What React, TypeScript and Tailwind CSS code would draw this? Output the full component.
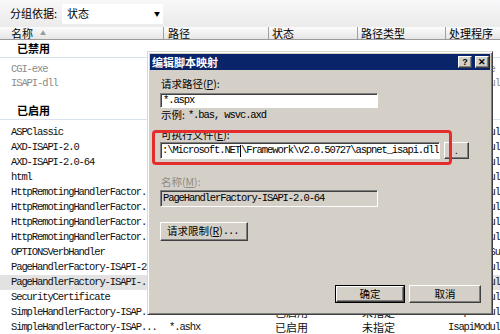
import React from 'react';

const mono = "font-['Liberation_Mono',monospace] text-[10.5px] tracking-[-1.1px]";
const cjk = "font-['Noto_Sans_CJK_SC',sans-serif]";

type Row = {
  name: string;
  path: string;
  state: string;
  type: string;
  handler: string;
  selected?: boolean;
};

const disabledRows: Row[] = [
  { name: 'CGI-exe', path: '*.exe', state: '已禁用', type: '文件', handler: 'CgiModule' },
  { name: 'ISAPI-dll', path: '*.dll', state: '已禁用', type: '文件', handler: 'IsapiModule' },
];

const enabledRows: Row[] = [
  { name: 'ASPClassic', path: '*.asp', state: '已启用', type: '文件', handler: 'IsapiModule' },
  { name: 'AXD-ISAPI-2.0', path: '*.axd', state: '已启用', type: '未指定', handler: 'IsapiModule' },
  { name: 'AXD-ISAPI-2.0-64', path: '*.axd', state: '已启用', type: '未指定', handler: 'IsapiModule' },
  { name: 'html', path: '*.html', state: '已启用', type: '文件', handler: 'IsapiModule' },
  { name: 'HttpRemotingHandlerFactor.', path: '*.rem', state: '已启用', type: '未指定', handler: 'IsapiModule' },
  { name: 'HttpRemotingHandlerFactor.', path: '*.rem', state: '已启用', type: '未指定', handler: 'IsapiModule' },
  { name: 'HttpRemotingHandlerFactor.', path: '*.soap', state: '已启用', type: '未指定', handler: 'IsapiModule' },
  { name: 'HttpRemotingHandlerFactor.', path: '*.soap', state: '已启用', type: '未指定', handler: 'IsapiModule' },
  { name: 'OPTIONSVerbHandler', path: '*', state: '已启用', type: '未指定', handler: 'ProtocolSupportModule' },
  { name: 'PageHandlerFactory-ISAPI-2', path: '*.aspx', state: '已启用', type: '未指定', handler: 'IsapiModule' },
  { name: 'PageHandlerFactory-ISAPI-.', path: '*.aspx', state: '已启用', type: '未指定', handler: 'IsapiModule', selected: true },
  { name: 'SecurityCertificate', path: '*.cer', state: '已启用', type: '文件', handler: 'IsapiModule' },
  { name: 'SimpleHandlerFactory-ISAP.', path: '*.ashx', state: '已启用', type: '未指定', handler: 'IsapiModule' },
  { name: 'SimpleHandlerFactory-ISAP...', path: '*.ashx', state: '已启用', type: '未指定', handler: 'IsapiModule' },
];

const ListRow = ({ row, h, muted }: { row: Row; h: string; muted?: boolean }) => (
  <div
    className={`flex items-center whitespace-nowrap ${h} ${row.selected ? 'bg-[#e2e2e2]' : ''} ${
      muted ? 'text-[#8c8c8c]' : 'text-[#111]'
    }`}
  >
    <div className={`w-[164px] pl-[11px] overflow-hidden ${mono}`}>{row.name}</div>
    <div className={`w-[105px] pl-[5px] ${mono}`}>{row.path}</div>
    <div className={`w-[89px] pl-[6px] text-[11px] leading-none ${cjk}`}>{row.state}</div>
    <div className={`w-[88px] pl-[4px] text-[11px] leading-none ${cjk}`}>{row.type}</div>
    <div className={`flex-1 pl-[2px] overflow-hidden ${mono}`}>{row.handler}</div>
  </div>
);

const GroupHeader = ({ label }: { label: string }) => (
  <div className="h-[18px] pl-[17px] flex items-center border-b border-[#d9e2ec]">
    <span className={`text-[11px] font-bold leading-none text-black ${cjk}`}>{label}</span>
  </div>
);

const raised =
  'bg-[#d4d0c8] border border-t-white border-l-white border-r-[#404040] border-b-[#404040] shadow-[inset_-1px_-1px_0_#808080]';
const sunken =
  'border border-t-[#808080] border-l-[#808080] border-r-white border-b-white shadow-[inset_1px_1px_0_#404040]';

const Label = ({ children, muted }: { children: React.ReactNode; muted?: boolean }) => (
  <div className={`h-[14px] pl-[1px] flex items-center text-[10.5px] leading-none ${cjk} ${muted ? 'text-[#8c8a85]' : 'text-black'}`}>
    {children}
  </div>
);

const EditDialog = () => (
  <div className="absolute left-[147px] top-[51px] w-[346px] h-[264px] bg-[#d4d0c8] border border-t-[#dcd9d2] border-l-[#dcd9d2] border-r-[#404040] border-b-[#404040] shadow-[inset_1px_1px_0_#fff,inset_-1px_-1px_0_#808080] p-[2px] flex flex-col">
    {/* title bar */}
    <div className="h-[16px] bg-[#0a246a] flex items-center justify-between pl-[2px] pr-[1px]">
      <span className={`text-[11px] font-bold text-white leading-none ${cjk}`}>编辑脚本映射</span>
      <div className="flex gap-[3px]">
        <div className={`w-[14px] h-[12px] flex items-center justify-center text-[9px] font-bold leading-none text-black font-['Liberation_Sans',sans-serif] ${raised}`}>?</div>
        <div className={`w-[14px] h-[12px] flex items-center justify-center text-[9px] font-bold leading-none text-black font-['Liberation_Sans',sans-serif] ${raised}`}>✕</div>
      </div>
    </div>

    <div className="flex flex-col pl-[10px] flex-1">
      <div className="mt-[7px]">
        <Label>
          请求路径(<span className="underline">P</span>):
        </Label>
      </div>
      <div className={`mt-[2px] w-[218px] h-[15px] bg-white flex items-center pl-[2px] text-black ${mono} ${sunken}`}>
        *.aspx
      </div>
      <Label>
        示例: <span className={`ml-[3px] ${mono}`}>*.bas, wsvc.axd</span>
      </Label>
      <div className="mt-[6px]">
        <Label>
          可执行文件(<span className="underline">E</span>):
        </Label>
      </div>
      <div className="flex items-center">
        <div className={`w-[280px] h-[17px] bg-white flex items-center pl-[1px] overflow-hidden whitespace-nowrap text-black ${mono} ${sunken}`}>
          <span>:\Microsoft.NET</span>
          <span className="inline-block w-px h-[12px] bg-black" />
          <span>\Framework\v2.0.50727\aspnet_isapi.dll</span>
        </div>
        <div className={`ml-[4px] w-[25px] h-[17px] flex items-end justify-center pb-[3px] text-[10px] leading-none text-black ${raised}`}>
          .
        </div>
      </div>
      <div className="mt-[16px]">
        <Label muted>
          名称(<span className="underline">M</span>):
        </Label>
      </div>
      <div className={`mt-[1px] w-[218px] h-[17px] bg-[#d4d0c8] flex items-center pl-[2px] text-black ${mono} ${sunken}`}>
        PageHandlerFactory-ISAPI-2.0-64
      </div>
      <div className={`mt-[15px] w-[88px] h-[19px] flex items-center pl-[6px] text-[10.5px] leading-none text-black ${cjk} ${raised}`}>
        请求限制(<span className="underline">R</span>)<span className={mono}>...</span>
      </div>
      <div className="mt-[44px] flex justify-end gap-[4px] pr-[9px]">
        <div className="w-[70px] h-[18px] border border-black">
          <div className={`w-full h-full flex items-center justify-center text-[10.5px] leading-none text-black ${cjk} ${raised}`}>
            确定
          </div>
        </div>
        <div className={`w-[72px] h-[18px] flex items-center justify-center text-[10.5px] leading-none text-black ${cjk} ${raised}`}>
          取消
        </div>
      </div>
    </div>

    {/* highlight */}
    <div className="absolute left-[4px] top-[78px] w-[300px] h-[35px] border-[3px] border-[#e52c2c] rounded-[4px]" />
  </div>
);

export default function App() {
  return (
    <div className={`relative w-[500px] h-[334px] overflow-hidden bg-white ${cjk}`}>
      {/* toolbar */}
      <div className="h-[27px] flex items-center bg-linear-to-b from-[#f8f7f9] to-[#ebebeb]">
        <span className="ml-[10px] text-[11px] leading-none text-black">分组依据:</span>
        <div className="ml-[5px] w-[101px] h-[20px] bg-white flex items-center justify-between pl-[5px] pr-[3px]">
          <span className="text-[11px] leading-none text-black">状态</span>
          <span className="text-[6px] leading-none text-black">▼</span>
        </div>
      </div>

      {/* column header */}
      <div className="h-[13px] flex bg-linear-to-b from-[#fbfbfb] to-[#e6e6e6] border-b border-[#9a9a9a] text-[11px] leading-none text-black">
        <div className="w-[164px] pl-[11px] border-r border-[#a0a0a0] flex items-center">
          名称<span className="ml-[7px] text-[6px] text-[#9a9a9a]">▲</span>
        </div>
        <div className="w-[105px] pl-[4px] border-r border-[#a0a0a0] flex items-center">路径</div>
        <div className="w-[89px] pl-[3px] border-r border-[#a0a0a0] flex items-center">状态</div>
        <div className="w-[88px] pl-[3px] border-r border-[#a0a0a0] flex items-center">路径类型</div>
        <div className="flex-1 pl-[3px] flex items-center">处理程序</div>
      </div>

      {/* list */}
      <div className="flex flex-col">
        <GroupHeader label="已禁用" />
        <div className="mt-[5px]">
          {disabledRows.map((r, i) => (
            <ListRow key={i} row={r} h="h-[14px]" muted />
          ))}
        </div>
        <div className="mt-[11px]">
          <GroupHeader label="已启用" />
        </div>
        <div className="mt-[5px]">
          {enabledRows.map((r, i) => (
            <ListRow key={i} row={r} h="h-[15px]" />
          ))}
        </div>
      </div>

      <EditDialog />
    </div>
  );
}
